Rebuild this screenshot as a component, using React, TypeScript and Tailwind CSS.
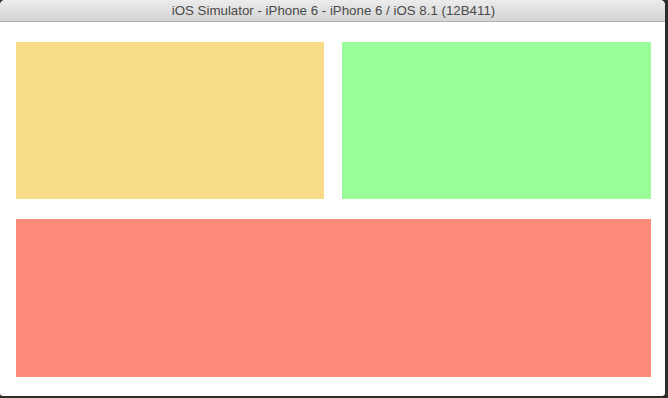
export default function App() {
  return (
    <div className="w-[668px] h-[398px] bg-[#2e2c2b] overflow-hidden">
      <div className="w-[665px] h-[396px] bg-white rounded-t-[5px] rounded-b-[3px] overflow-hidden flex flex-col">
        <div className="h-[22px] shrink-0 bg-gradient-to-b from-[#ececec] to-[#d4d4d4] border-b border-[#b1b1b1] flex items-center justify-center">
          <span className="text-[13.3px] leading-none text-[#4a4a4a] font-['Liberation_Sans',Arial,sans-serif] pl-[2px]">
            iOS Simulator - iPhone 6 - iPhone 6 / iOS 8.1 (12B411)
          </span>
        </div>
        <div className="flex flex-col gap-[20px] pl-[16px] pt-[20px] w-[651px]">
          <div className="flex gap-[18px] h-[157px]">
            <div className="w-[308px] bg-[#f9dc88]" />
            <div className="flex-1 bg-[#99fe99]" />
          </div>
          <div className="h-[158px] bg-[#fe8b79]" />
        </div>
      </div>
    </div>
  );
}
